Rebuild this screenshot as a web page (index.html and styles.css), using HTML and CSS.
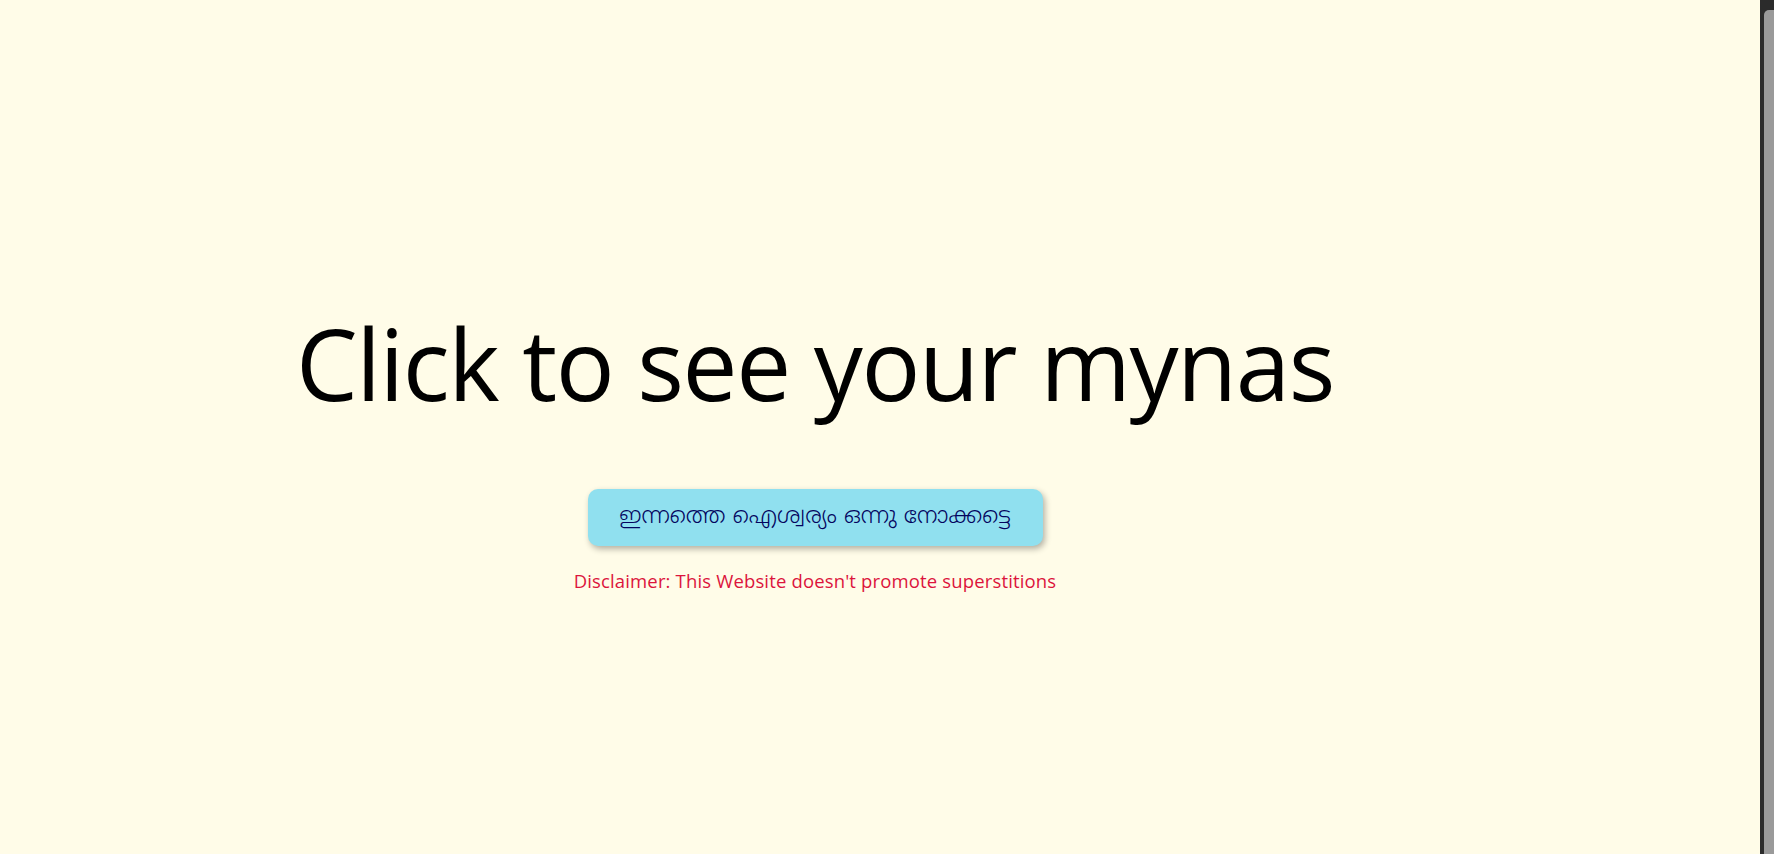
FILE: index.html
```html
<!DOCTYPE html>
<html lang="en">
<head>
<meta charset="utf-8">
<title>Mynas</title>
<link rel="stylesheet" href="styles.css">
</head>
<body>
<main class="page">
  <h1 class="title">Click to see your mynas</h1>
  <button class="fortune-btn" type="button">ഇന്നത്തെ ഐശ്വര്യം ഒന്നു നോക്കട്ടെ</button>
  <p class="disclaimer">Disclaimer: This Website doesn't promote superstitions</p>
</main>
<div class="scrollbar" aria-hidden="true"><div class="scrollbar-thumb"></div></div>
</body>
</html>
```
FILE: styles.css
```css
html {
  background: #fffce8;
  overflow: hidden;
}
body {
  margin: 0;
  background: #fffce8;
  font-family: "Open Sans", "Noto Sans", "Noto Sans Malayalam", sans-serif;
  display: flex;
  align-items: flex-start;
}
.page {
  flex: 1;
  min-height: 100vh;
  display: flex;
  flex-direction: column;
  align-items: center;
  padding: 300px 138px 8px 8px;
  box-sizing: border-box;
}
.title {
  margin: 0;
  font-size: 98px;
  font-weight: 400;
  color: #000;
  line-height: 1.3;
  letter-spacing: -1.45px;
}
.fortune-btn {
  margin-top: 62px;
  width: 455px;
  height: 57px;
  padding: 0;
  border: none;
  border-radius: 10px;
  background: #90e0ef;
  color: #03045e;
  font-family: "Noto Sans Malayalam", "Noto Sans", sans-serif;
  font-weight: 300;
  font-size: 23.3px;
  box-shadow: 2px 3px 6px rgba(0, 0, 0, 0.3);
  cursor: pointer;
}
.disclaimer {
  margin: 22px 0 0;
  color: #dc143c;
  font-size: 18.5px;
  letter-spacing: 0.15px;
}
.scrollbar {
  width: 14px;
  height: 100vh;
  flex: none;
  background: #2b2b2b;
  display: flex;
  flex-direction: column;
  padding: 10px 0 0 4px;
  box-sizing: border-box;
}
.scrollbar-thumb {
  flex: 1;
  background: #9a9a9a;
  border-radius: 5px 0 0 0;
}
```
